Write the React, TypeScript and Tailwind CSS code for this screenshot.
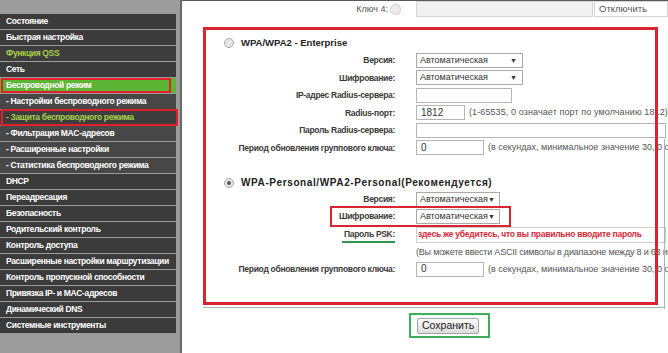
import React from "react";

const menu = [
  { t: "Состояние" },
  { t: "Быстрая настройка" },
  { t: "Функция QSS", kind: "qss" },
  { t: "Сеть" },
  { t: "Беспроводной режим", kind: "active" },
  { t: "- Настройки беспроводного режима", sub: true },
  { t: "- Защита беспроводного режима", sub: true, kind: "current" },
  { t: "- Фильтрация MAC-адресов", sub: true },
  { t: "- Расширенные настройки", sub: true },
  { t: "- Статистика беспроводного режима", sub: true },
  { t: "DHCP" },
  { t: "Переадресация" },
  { t: "Безопасность" },
  { t: "Родительский контроль" },
  { t: "Контроль доступа" },
  { t: "Расширенные настройки маршрутизации" },
  { t: "Контроль пропускной способности" },
  { t: "Привязка IP- и MAC-адресов" },
  { t: "Динамический DNS" },
  { t: "Системные инструменты" },
];

const Sidebar = () => (
  <div className="flex w-[182px] shrink-0">
    <div className="w-[180px] bg-[#9c9c9c] pt-[14px]">
      <div className="flex flex-col gap-px">
        {menu.map((m, i) => (
          <div
            key={i}
            className={`relative flex h-[15px] w-[176px] items-center pl-[6px] text-[8.5px] font-bold leading-none tracking-[-0.35px] ${
              m.kind === "active"
                ? "bg-[#5db535] text-white"
                : m.kind === "qss" || m.kind === "current"
                ? "bg-[#3d3d3d] text-[#a8d14a]"
                : m.sub
                ? "bg-[#474747] text-white"
                : "bg-[#3b3b3b] text-white"
            }`}
          >
            <span className="whitespace-nowrap">{m.t}</span>
            {m.kind === "active" && (
              <div className="pointer-events-none absolute inset-y-0 left-px w-[170px] border-2 border-[#e0202a]" />
            )}
            {m.kind === "current" && (
              <div className="pointer-events-none absolute -inset-y-px left-px w-[177px] border-2 border-[#e0202a]" />
            )}
          </div>
        ))}
      </div>
    </div>
    <div className="w-[2px] bg-[#6a6a6a]" />
  </div>
);

const Select = ({ w }: { w: string }) => (
  <div className={`flex h-[15px] ${w} items-center justify-between border border-[#a9a9a9] bg-white pl-[3px] pr-[5px] text-[9px] leading-none text-[#333]`}>
    <span>Автоматическая</span>
    <span className="text-[7px]">▼</span>
  </div>
);

const Input = ({ w, value }: { w: string; value?: string }) => (
  <div className={`flex h-[15px] ${w} shrink-0 items-center border border-[#b5b5b5] bg-white pl-[4px] text-[10px] leading-none text-[#333]`}>
    {value}
  </div>
);

const Row = ({
  label,
  h = "h-[17.5px]",
  children,
  labelExtra,
}: {
  label: string;
  h?: string;
  children?: React.ReactNode;
  labelExtra?: string;
}) => (
  <div className={`flex ${h} items-center`}>
    <div className="w-[189px] shrink-0 whitespace-nowrap text-right text-[8.5px] font-bold leading-none tracking-[-0.3px] text-[#3a3a3a]">
      <span className={labelExtra}>{label}</span>
    </div>
    <div className="ml-[21px] flex items-center whitespace-nowrap">{children}</div>
  </div>
);

const Hint = ({ children, wide }: { children: React.ReactNode; wide?: boolean }) => (
  <span className={`ml-[4px] whitespace-nowrap text-[9px] leading-none text-[#555] ${wide ? "tracking-[0.1px]" : ""}`}>
    {children}
  </span>
);

const Radio = ({ on }: { on?: boolean }) => (
  <div className="flex h-[10px] w-[10px] items-center justify-center rounded-full border border-[#a8a8a8] bg-[#e6e6e6]">
    {on && <div className="h-[4px] w-[4px] rounded-full bg-[#555]" />}
  </div>
);

export default function App() {
  return (
    <div
      className="flex h-[353px] w-[668px] overflow-hidden bg-white"
      style={{ fontFamily: '"Liberation Sans", Arial, sans-serif' }}
    >
      <Sidebar />
      <div className="relative flex-1 border-t border-[#5a5a5a]">
        {/* top row */}
        <div className="flex h-[16px] items-center">
          <div className="w-[206px] text-right text-[9px] leading-none text-[#555]">Ключ 4:</div>
          <div className="ml-[2px] h-[11px] w-[11px] rounded-full border border-[#d0d0d0] bg-[#ececec]" />
          <div className="ml-[15px] h-[16px] w-[177px] border border-[#d5d5d5] bg-[#f1f1f1]" />
          <div className="ml-[1px] flex h-[16px] flex-1 items-center border border-[#d5d5d5] bg-white pl-[4px] text-[9.5px] leading-none text-[#555]">
            Отключить
          </div>
        </div>

        {/* red annotated area */}
        <div className="relative ml-[21px] mt-[10px] h-[278px] w-[455px] p-[3px]">
          <div className="ml-[18px] mt-[5px] flex h-[16px] items-center">
            <Radio />
            <span className="ml-[7px] text-[9.5px] font-bold leading-none text-[#222]">WPA/WPA2 - Enterprise</span>
          </div>
          <div className="mt-[0.5px]">
            <Row label="Версия:">
              <Select w="w-[107px]" />
            </Row>
            <Row label="Шифрование:">
              <Select w="w-[107px]" />
            </Row>
            <Row label="IP-адрес Radius-сервера:">
              <Input w="w-[96px]" />
            </Row>
            <Row label="Radius-порт:">
              <Input w="w-[49px]" value="1812" />
              <Hint wide>(1-65535, 0 означает порт по умолчанию 1812)</Hint>
            </Row>
            <Row label="Пароль Radius-сервера:">
              <Input w="w-[250px]" />
            </Row>
            <Row label="Период обновления группового ключа:">
              <Input w="w-[68px]" value="0" />
              <Hint>(в секундах, минимальное значение 30, 0 означает отключено)</Hint>
            </Row>
          </div>

          <div className="ml-[18px] mt-[18.5px] flex h-[16px] items-center">
            <Radio on />
            <span className="ml-[7px] text-[10px] font-bold leading-none tracking-[0.6px] text-[#222]">
              WPA-Personal/WPA2-Personal(Рекомендуется)
            </span>
          </div>
          <Row label="Версия:" h="h-[16px]">
            <Select w="w-[84px]" />
          </Row>
          <div className="relative">
            <Row label="Шифрование:" h="h-[18px]">
              <Select w="w-[84px]" />
            </Row>
            <div className="pointer-events-none absolute left-[124px] top-[-1px] h-[21px] w-[181px] border-2 border-[#d9252f]" />
          </div>
          <Row label="Пароль PSK:" h="h-[19px]" labelExtra="border-b-2 border-[#2f9a4c] pb-[2px] pl-[2px]">
            <div className="flex h-[16px] w-[250px] items-center border border-[#cfcfcf] bg-white pl-[1px] text-[8.5px] font-bold leading-none tracking-[-0.25px] text-[#d8283a]">
              здесь же убедитесь, что вы правильно вводите пароль
            </div>
          </Row>
          <Row label="" h="h-[16px]">
            <span className="text-[9px] leading-none tracking-[-0.2px] text-[#555]">
              (Вы можете ввести ASCII символы в диапазоне между 8 и 63 или 64 шестнадцатеричных символа.)
            </span>
          </Row>
          <Row label="Период обновления группового ключа:" h="h-[18px]">
            <Input w="w-[68px]" value="0" />
            <Hint>(в секундах, минимальное значение 30, 0 означает отключено)</Hint>
          </Row>

          <div className="pointer-events-none absolute inset-0 border-[3px] border-[#dc2330]" />
        </div>

        <div className="ml-[21px] mt-[2px] h-px w-[461px] bg-[#9fb8b4]" />
        <div className="absolute right-[3px] top-[138px] h-[170px] w-px bg-[#b0b0b0]" />

        {/* save */}
        <div className="ml-[227px] mt-[5px] flex h-[25px] w-[81px] items-center border-2 border-[#3fae5a] pl-[6px]">
          <div className="flex h-[16px] items-center rounded-[2px] border border-[#a5a5a5] bg-gradient-to-b from-[#fbfbfb] to-[#dcdcdc] px-[4px] text-[10.5px] leading-none text-[#222]">
            Сохранить
          </div>
        </div>
      </div>
    </div>
  );
}
